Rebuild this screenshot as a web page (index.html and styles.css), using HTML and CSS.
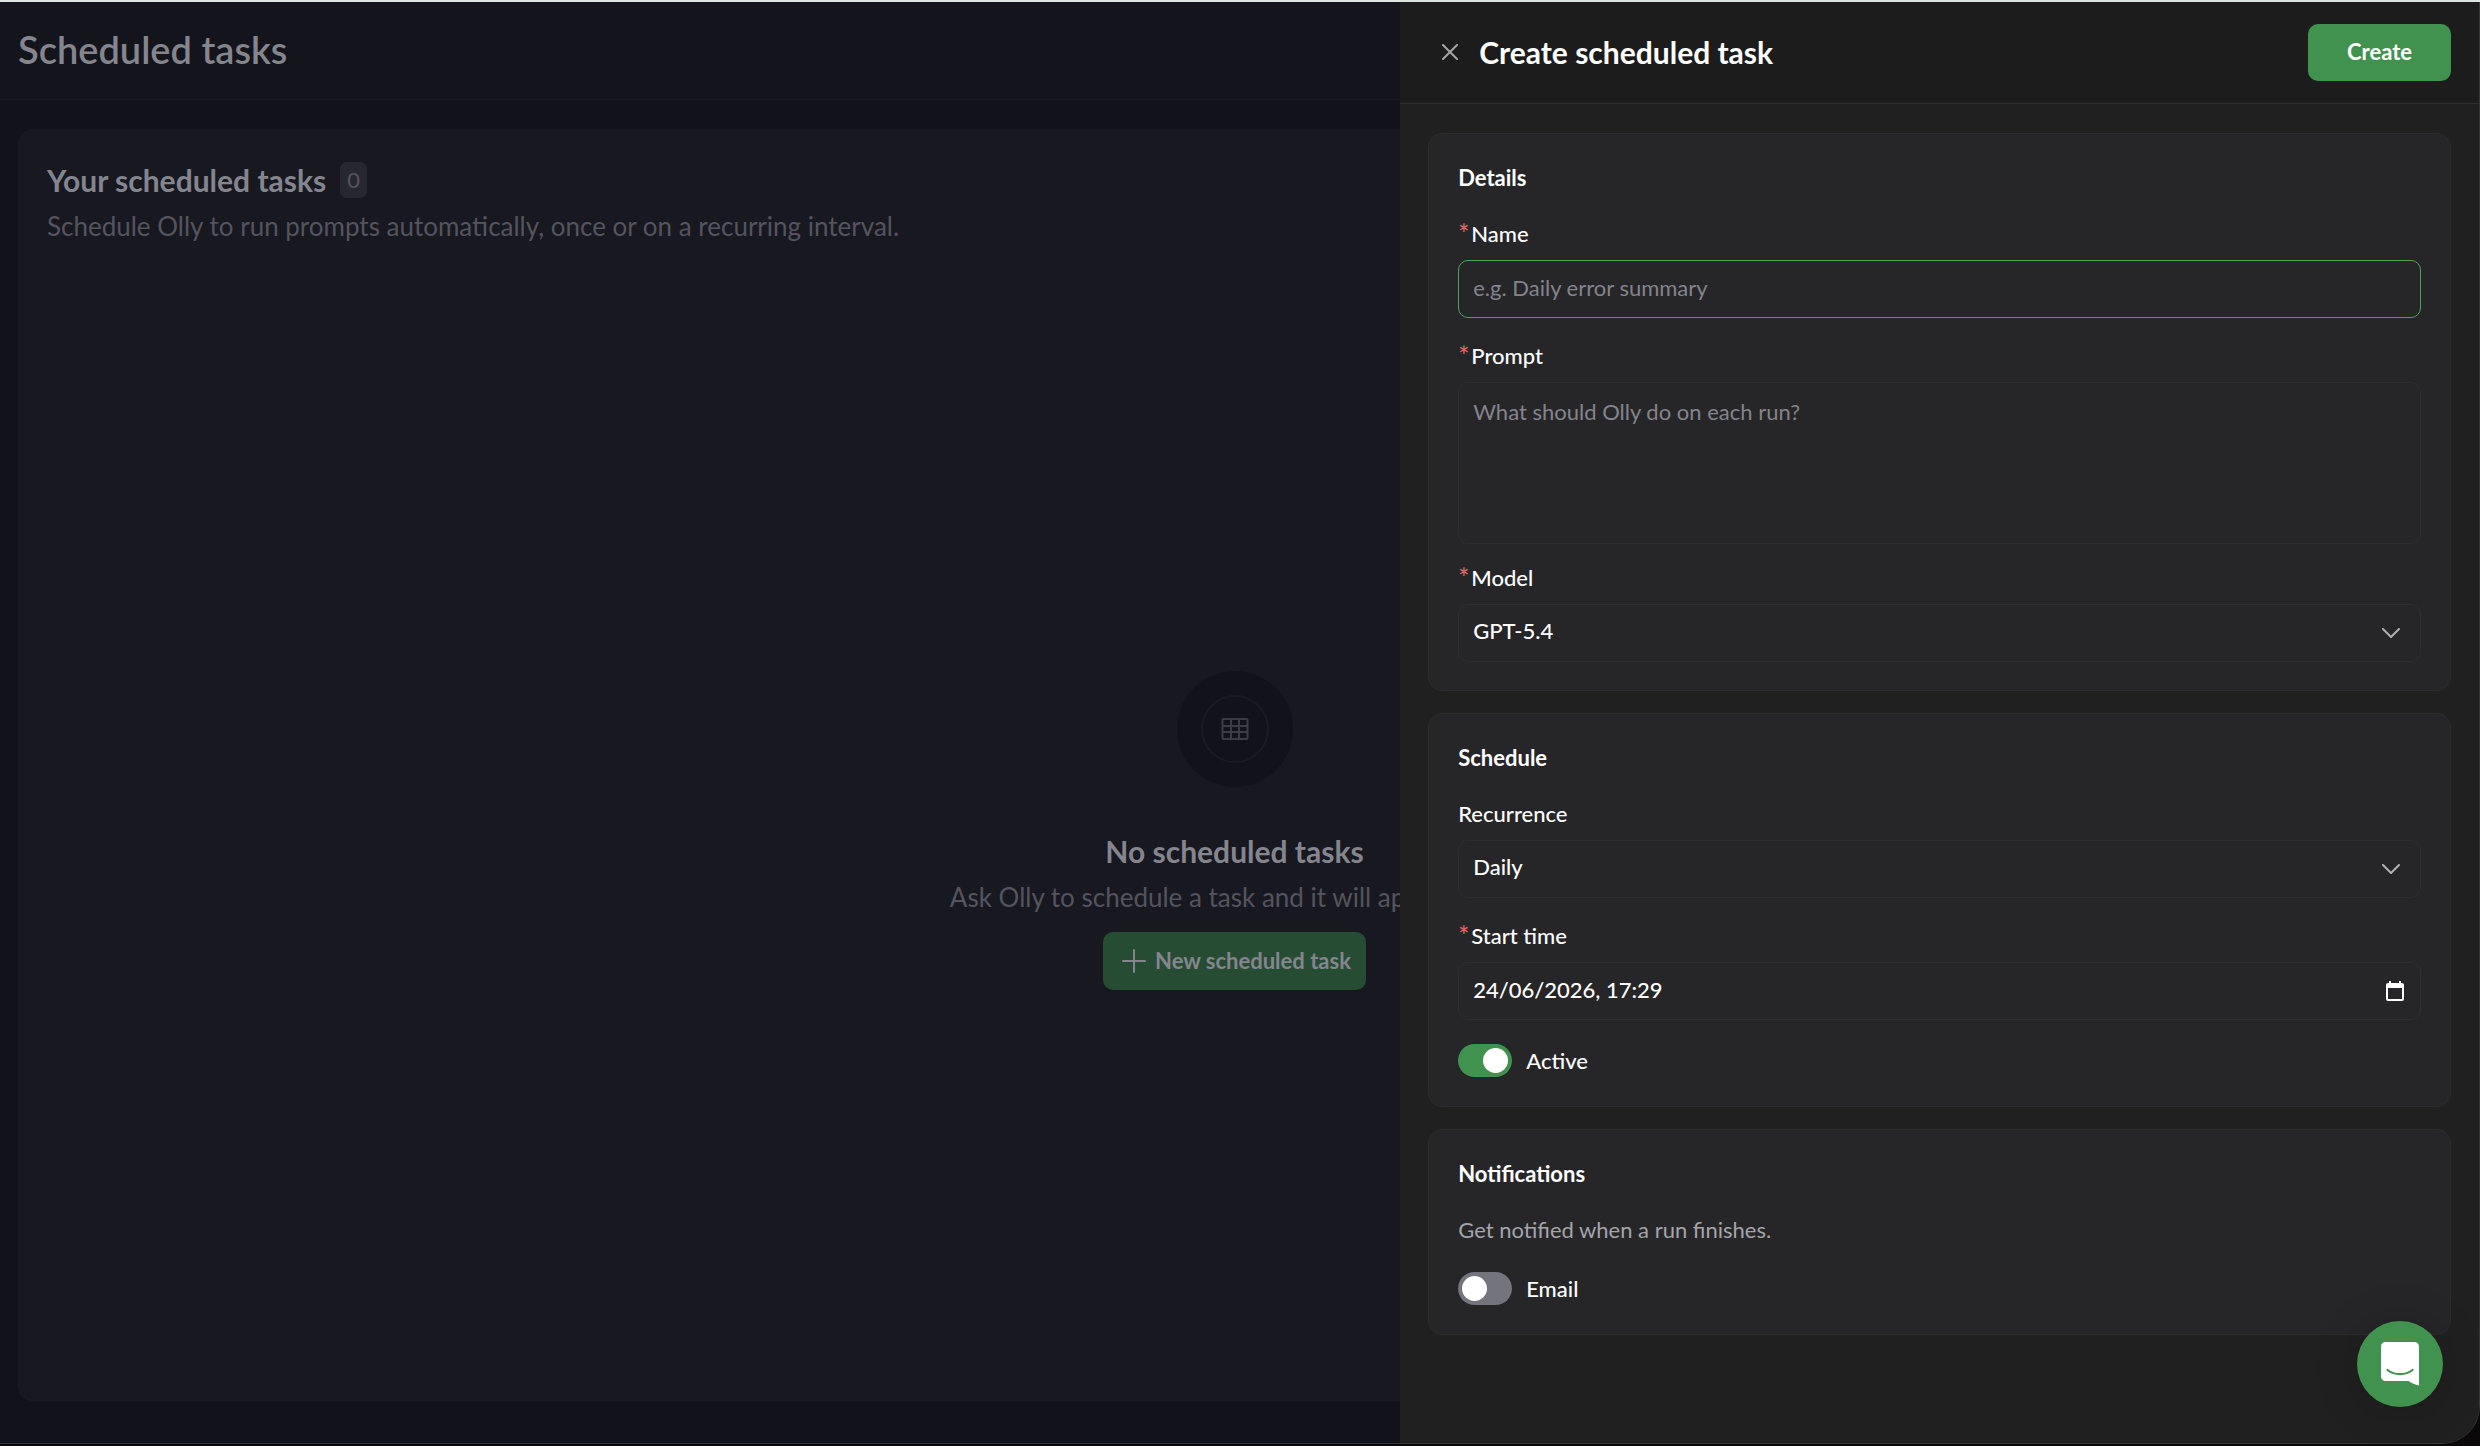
FILE: index.html
```html
<!DOCTYPE html>
<html lang="en">
<head>
    <meta charset="UTF-8">
    <meta name="viewport" content="width=device-width, initial-scale=1.0">
    <title>Scheduled tasks</title>
    <link rel="stylesheet" href="styles.css">
</head>
<body>
    <div class="window">
        <div class="page">
            <header class="page-header">
                <h1>Scheduled tasks</h1>
            </header>

            <main class="page-body">
                <section class="tasks-card">
                    <div class="tasks-title">
                        <h2>Your scheduled tasks</h2>
                        <span class="badge">0</span>
                    </div>
                    <p class="tasks-text">Schedule Olly to run prompts automatically, once or on a recurring interval.</p>

                    <div class="empty">
                        <div class="empty-icon">
                            <div class="empty-ring">
                                <svg width="28" height="22" viewBox="0 0 28 22" fill="none" stroke="currentColor" stroke-width="2">
                                    <rect x="1.5" y="1" width="25" height="20" rx="1"/>
                                    <path d="M10 1v20M18 1v20M1.5 8h25M1.5 14h25"/>
                                </svg>
                            </div>
                        </div>
                        <h3>No scheduled tasks</h3>
                        <p class="tasks-text">Ask Olly to schedule a task and it will appear here.</p>
                        <button type="button" class="btn btn-dim">
                            <svg width="24" height="24" viewBox="0 0 24 24" fill="none" stroke="currentColor" stroke-width="2" stroke-linecap="round">
                                <path d="M12 1v22M1 12h22"/>
                            </svg>
                            New scheduled task
                        </button>
                    </div>
                </section>
            </main>
        </div>

        <!-- Create task drawer -->
        <aside class="drawer">
            <header class="drawer-header">
                <button type="button" class="btn-close" aria-label="Close">
                    <svg width="16" height="16" viewBox="0 0 16 16" fill="none" stroke="currentColor" stroke-width="2" stroke-linecap="round">
                        <path d="M1 1l14 14M15 1L1 15"/>
                    </svg>
                </button>
                <h2>Create scheduled task</h2>
                <button type="submit" form="taskForm" class="btn btn-primary">Create</button>
            </header>

            <form id="taskForm" class="drawer-body">
                <section class="card">
                    <h3>Details</h3>
                    <div class="field">
                        <label for="name"><span class="required">*</span>Name</label>
                        <input type="text" id="name" class="control active" placeholder="e.g. Daily error summary">
                    </div>
                    <div class="field field-prompt">
                        <label for="prompt"><span class="required">*</span>Prompt</label>
                        <textarea id="prompt" class="control" placeholder="What should Olly do on each run?"></textarea>
                    </div>
                    <div class="field">
                        <label for="model"><span class="required">*</span>Model</label>
                        <div class="control-wrap">
                            <select id="model" class="control">
                                <option>GPT-5.4</option>
                            </select>
                            <svg class="chevron" width="18" height="10" viewBox="0 0 18 10" fill="none" stroke="currentColor" stroke-width="2" stroke-linecap="round" stroke-linejoin="round">
                                <path d="M1 1l8 8 8-8"/>
                            </svg>
                        </div>
                    </div>
                </section>

                <section class="card">
                    <h3>Schedule</h3>
                    <div class="field">
                        <label for="recurrence">Recurrence</label>
                        <div class="control-wrap">
                            <select id="recurrence" class="control">
                                <option>Daily</option>
                            </select>
                            <svg class="chevron" width="18" height="10" viewBox="0 0 18 10" fill="none" stroke="currentColor" stroke-width="2" stroke-linecap="round" stroke-linejoin="round">
                                <path d="M1 1l8 8 8-8"/>
                            </svg>
                        </div>
                    </div>
                    <div class="field">
                        <label for="start"><span class="required">*</span>Start time</label>
                        <div class="control-wrap">
                            <input type="text" id="start" class="control" value="24/06/2026, 17:29">
                            <button type="button" class="btn-calendar" aria-label="Pick a date">
                                <svg width="18" height="20" viewBox="0 0 18 20" fill="currentColor">
                                    <path fill-rule="evenodd" d="M3 0h2v2h8V0h2v2h1a2 2 0 0 1 2 2v14a2 2 0 0 1-2 2H2a2 2 0 0 1-2-2V4a2 2 0 0 1 2-2h1zM2 7v11h14V7z"/>
                                </svg>
                            </button>
                        </div>
                    </div>
                    <label class="switch-row">
                        <input type="checkbox" class="switch" checked>
                        Active
                    </label>
                </section>

                <section class="card">
                    <h3>Notifications</h3>
                    <p class="hint">Get notified when a run finishes.</p>
                    <label class="switch-row">
                        <input type="checkbox" class="switch">
                        Email
                    </label>
                </section>
            </form>
        </aside>

        <button type="button" class="chat-btn" aria-label="Open chat">
            <svg width="38" height="44" viewBox="0 0 38 44">
                <path fill="#fff" d="M4.500 0h29A4.500 4.500 0 0 1 38 4.500V43.500C34 42.500 30.500 41 27.500 39H4.500A4.500 4.500 0 0 1 0 34.500v-30A4.500 4.500 0 0 1 4.500 0z"/>
                <path fill="none" stroke="#42924f" stroke-width="2.200" stroke-linecap="round" d="M6.500 28c7 5.500 18 5.500 25 0"/>
            </svg>
        </button>
    </div>
</body>
</html>
```
FILE: styles.css
```css
* { box-sizing: border-box; }
body { margin: 0; height: 100vh; display: flex; flex-direction: column; padding-bottom: 2px; border-top: 2px solid #dfe3e2; background: #0a0809; color: #fff; font-family: Lato, "Open Sans", sans-serif; font-size: 22px; line-height: 30px; }
h1, h2, h3, p { margin: 0; }
button, input, select, textarea { font: inherit; color: inherit; }
svg { display: block; flex: none; }

.window { position: relative; flex: 1; display: flex; min-height: 0; overflow: hidden; background: #12121a; border: solid #38383a; border-width: 0 1px 1px 0; border-bottom-right-radius: 38px; }

/* Page behind the drawer */
.page { flex: 1; display: flex; flex-direction: column; color: #85858e; }
.page-header { display: flex; align-items: center; height: 98px; padding: 0 18px 4px; background: #14141d; border-bottom: 1px solid #1a1a23; }
.page-header h1 { font-size: 38px; line-height: 48px; font-weight: 600; }
.page-body { flex: 1; display: flex; padding: 29px 28px 42px 18px; }
.tasks-card { flex: 1; display: flex; flex-direction: column; padding: 32px 28px 28px; background: #181820; border: 1px solid #1b1b24; border-radius: 14px; }
.tasks-title { display: flex; align-items: center; gap: 14px; }
.tasks-title h2, .empty h3, .drawer-header h2 { font-size: 30px; line-height: 36px; font-weight: 700; }
.badge { padding: 3px 7px; border-radius: 7px; background: #27272f; color: #54545e; }
.tasks-text { margin-top: 9px; font-size: 26px; line-height: 38px; color: #54545e; }

.empty { flex: 1; display: flex; flex-direction: column; align-items: center; justify-content: center; margin-top: 44px; }
.empty-icon { display: flex; align-items: center; justify-content: center; width: 116px; height: 116px; margin-bottom: 46px; border-radius: 50%; background: #12121a; }
.empty-ring { display: flex; align-items: center; justify-content: center; width: 68px; height: 68px; border: 2px solid #1b1b24; border-radius: 50%; color: #3c3c46; }

.btn { display: flex; align-items: center; justify-content: center; height: 58px; border: none; border-radius: 10px; font-weight: 700; cursor: pointer; }
.btn-dim { gap: 9px; margin-top: 16px; padding: 0 15px 0 19px; background: #264c34; }
.btn-primary { height: 57px; padding: 0 39px; background: #42924f; }

/* Drawer */
.drawer { position: absolute; top: 0; right: 0; bottom: 0; width: 43.5vw; background: #202020; }
.drawer-header { display: flex; align-items: center; height: 102px; padding: 0 28px 1px; background: #1c1c1c; border-bottom: 1px solid #2d2d2d; }
.drawer-header h2 { flex: 1; margin-left: 7px; }
.btn-close { display: flex; align-items: center; justify-content: center; width: 44px; height: 44px; padding: 0; border: none; background: none; color: #a5a5aa; cursor: pointer; }
.drawer-body { display: flex; flex-direction: column; gap: 22px; padding: 29px 28px; }

.card { padding: 28px 29px; background: #262628; border: 1px solid #2c2c2c; border-radius: 14px; }
.card h3 { margin-bottom: 25px; font-size: 22px; line-height: 32px; font-weight: 700; }
.field { display: flex; flex-direction: column; gap: 11px; margin-bottom: 23px; font-weight: 500; }
.field-prompt { margin-bottom: 19px; }
.field:last-child { margin-bottom: 0; }
.field label { display: flex; gap: 2px; }
.required { color: #dc6866; font-size: 26px; }

.control { width: 100%; height: 58px; padding: 0 14px 4px; background: #262628; border: 1px solid #2e2e30; border-radius: 10px; outline: none; appearance: none; }
.control::placeholder { color: #84848c; font-weight: 400; opacity: 1; }
.control.active { border-color: #4da065; }
textarea.control { height: 162px; padding: 14px; resize: none; }
.control-wrap { display: flex; align-items: center; position: relative; }
.chevron { position: absolute; right: 21px; color: #b0b0b3; pointer-events: none; }
.btn-calendar { position: absolute; right: 17px; padding: 0; border: none; background: none; cursor: pointer; }

.hint { margin-bottom: 26px; color: #a4a4aa; }
.switch-row { display: flex; align-items: center; gap: 14px; height: 35px; font-weight: 500; }
.switch { display: flex; align-items: center; width: 54px; height: 33px; margin: 0; padding: 0 4px; border-radius: 17px; background: #74747d; appearance: none; cursor: pointer; }
.switch::before { content: ""; width: 25px; height: 25px; border-radius: 50%; background: #fff; }
.switch:checked { justify-content: flex-end; background: #42924f; }

/* Floating chat button */
.chat-btn { position: absolute; right: 36px; bottom: 36px; display: flex; align-items: center; justify-content: center; width: 86px; height: 86px; padding: 0; border: none; border-radius: 50%; background: #42924f; box-shadow: 0 2px 44px rgba(0,0,0,0.18); cursor: pointer; }
```
